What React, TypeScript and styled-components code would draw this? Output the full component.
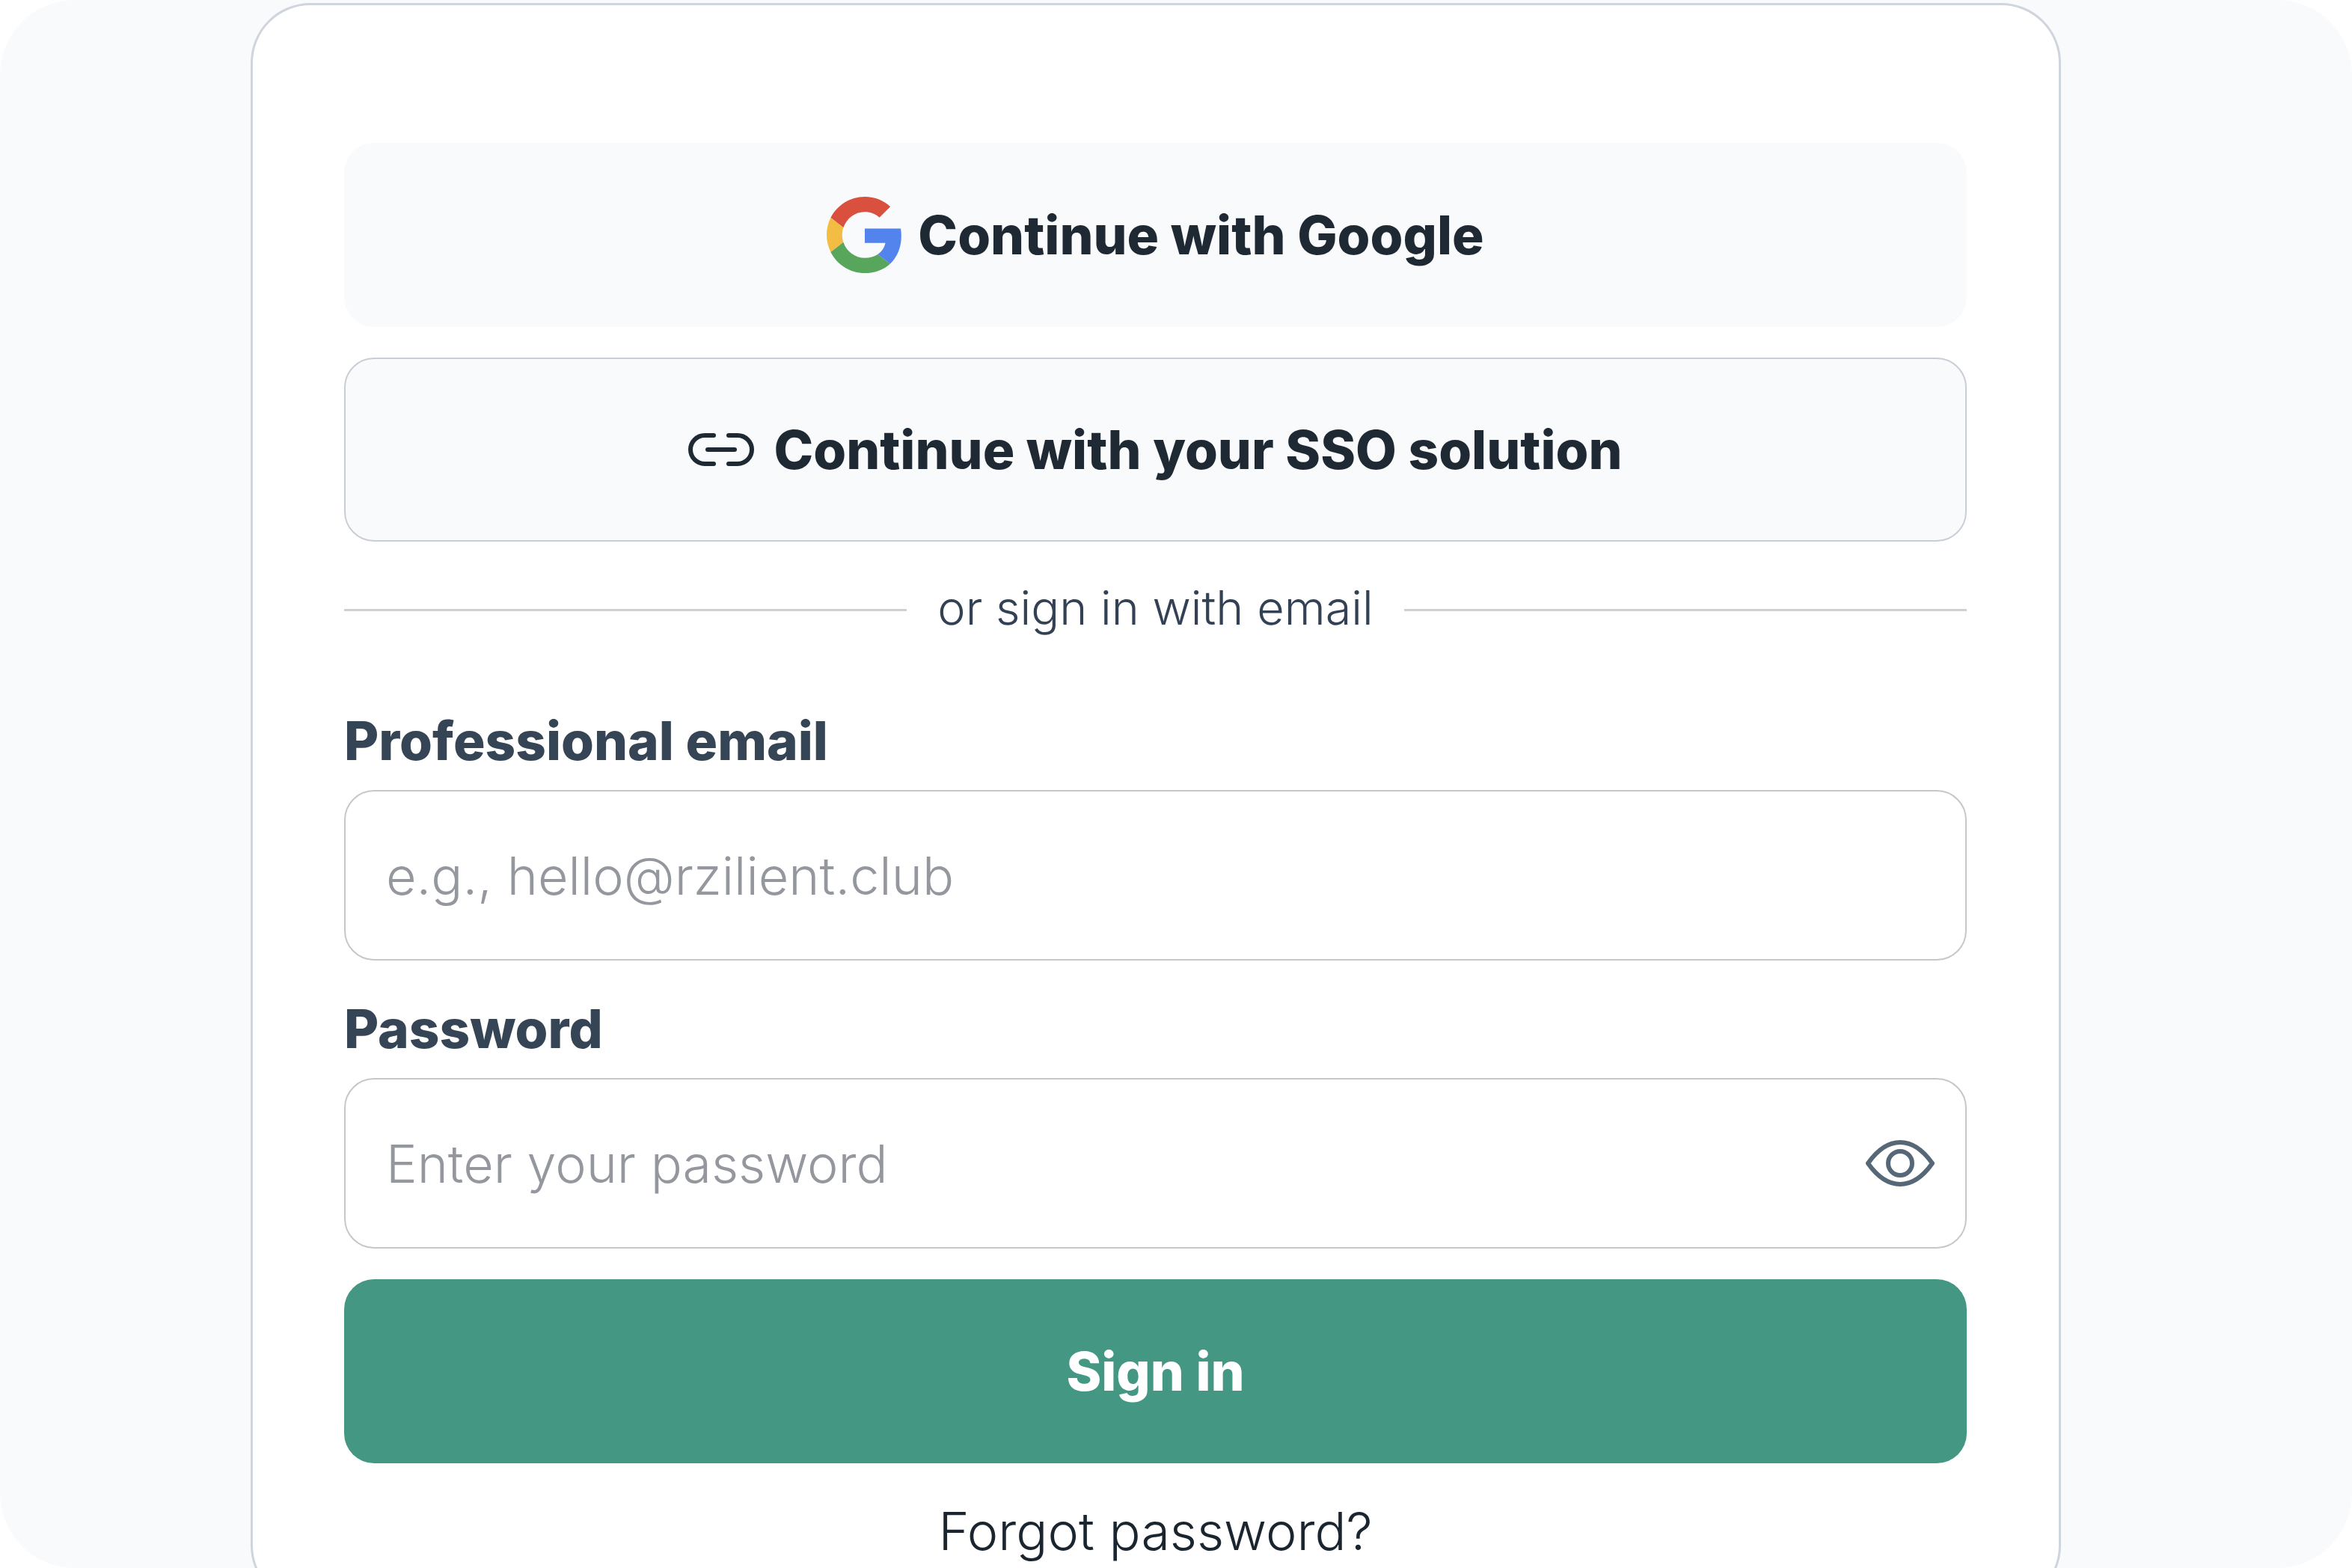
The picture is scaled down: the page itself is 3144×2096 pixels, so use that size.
import React, { useState } from "react";
import styled, { createGlobalStyle } from "styled-components";

const GlobalStyle = createGlobalStyle`
  *, *::before, *::after { box-sizing: border-box; }
  body { margin: 0; background: #ffffff; }
  body, button, input { font-family: Inter, "Open Sans", sans-serif; }
`;

const Page = styled.main`
  height: 100vh;
  overflow: hidden;
  padding: 4px 389px 0 335px;
  border-radius: 100px;
  background: #f9fafc;
`;

const Card = styled.section`
  padding: 184px 123px 46px 122px;
  border: 3px solid #cfd5dd;
  border-radius: 80px;
  background: #ffffff;
`;

const Form = styled.form`
  display: flex;
  flex-direction: column;
  gap: 41px;
`;

const Button = styled.button<{ $variant: "plain" | "outline" | "primary" }>`
  display: flex;
  align-items: center;
  justify-content: center;
  gap: 20px;
  width: 100%;
  height: 246px;
  padding: 0 40px;
  border: ${(p) => (p.$variant === "outline" ? "2px solid #c9ced6" : "none")};
  border-radius: 40px;
  background: ${(p) => (p.$variant === "primary" ? "#449782" : "#f9fafc")};
  color: ${(p) => (p.$variant === "primary" ? "#ffffff" : "#1f2933")};
  font-size: 71px;
  font-weight: 800;
  line-height: 100px;
  cursor: pointer;
`;

const Divider = styled.div`
  display: flex;
  align-items: center;
  gap: 41px;
  margin-bottom: 34px;

  &::before,
  &::after {
    content: "";
    flex: 1;
    height: 3px;
    background: #d0d0d0;
  }
`;

const DividerText = styled.span`
  padding-bottom: 6px;
  color: #334155;
  font-size: 63px;
  font-weight: 300;
  line-height: 94px;
`;

const Field = styled.div`
  display: flex;
  flex-direction: column;
  gap: 16px;
`;

const Label = styled.label`
  color: #364556;
  font-size: 71px;
  font-weight: 800;
  line-height: 100px;
`;

const InputBox = styled.div`
  display: flex;
  align-items: center;
  height: 228px;
  padding: 0 40px 0 54px;
  border: 2px solid #c7c7c7;
  border-radius: 40px;
  background: #ffffff;
`;

const Input = styled.input`
  flex: 1;
  min-width: 0;
  height: 100%;
  padding: 0;
  border: none;
  outline: none;
  background: transparent;
  color: #1f2933;
  font-size: 70px;
  font-weight: 300;

  &::placeholder {
    color: #94989e;
    opacity: 1;
  }
`;

const IconButton = styled.button`
  display: flex;
  padding: 0;
  border: none;
  background: none;
  color: #566777;
  cursor: pointer;
`;

const TextLink = styled.a`
  align-self: center;
  color: #1b2530;
  font-size: 70px;
  font-weight: 300;
  line-height: 100px;
  text-decoration: none;
`;

const GoogleLogo = () => (
  <svg width="102" height="102" viewBox="0 0 48 48" aria-hidden="true">
    <path fill="#d9503f" d="M24 9.5c3.54 0 6.71 1.22 9.21 3.6l6.85-6.85C35.9 2.38 30.47 0 24 0 14.62 0 6.51 5.38 2.56 13.22l7.98 6.19C12.43 13.72 17.74 9.5 24 9.5z" />
    <path fill="#5383ec" d="M46.98 24.55c0-1.57-.15-3.09-.38-4.55H24v9.02h12.94c-.58 2.96-2.26 5.48-4.78 7.18l7.73 6c4.51-4.18 7.09-10.36 7.09-17.65z" />
    <path fill="#f2bd42" d="M10.53 28.59c-.48-1.45-.76-2.99-.76-4.59s.27-3.14.76-4.59l-7.98-6.19C.92 16.46 0 20.12 0 24c0 3.88.92 7.54 2.56 10.78l7.97-6.19z" />
    <path fill="#58a55c" d="M24 48c6.48 0 11.93-2.13 15.89-5.81l-7.73-6c-2.15 1.45-4.92 2.3-8.16 2.3-6.26 0-11.57-4.22-13.47-9.91l-7.98 6.19C6.51 42.62 14.62 48 24 48z" />
  </svg>
);

const LinkIcon = () => (
  <svg width="94" height="48" viewBox="0 0 94 48" fill="none" stroke="currentColor" strokeWidth="6" strokeLinecap="round" strokeLinejoin="round" aria-hidden="true">
    <path d="M34 5H22a19 19 0 0 0 0 38h12" />
    <path d="M54 5h12a19 19 0 0 1 0 38H54" />
    <path d="M26 24h36" />
  </svg>
);

const EyeIcon = () => (
  <svg width="94" height="64" viewBox="0 0 94 64" fill="none" stroke="currentColor" strokeWidth="6" strokeLinejoin="round" aria-hidden="true">
    <path d="M4 32C16 15 30 4 47 4s31 11 43 28C78 49 64 60 47 60S16 49 4 32z" />
    <circle cx="47" cy="32" r="16" />
  </svg>
);

export default function App() {
  const [visible, setVisible] = useState(false);

  return (
    <>
      <GlobalStyle />
      <Page>
        <Card>
          <Form onSubmit={(e) => e.preventDefault()}>
            <Button type="button" $variant="plain">
              <GoogleLogo />
              Continue with Google
            </Button>
            <Button type="button" $variant="outline">
              <LinkIcon />
              Continue with your SSO solution
            </Button>
            <Divider>
              <DividerText>or sign in with email</DividerText>
            </Divider>
            <Field>
              <Label htmlFor="email">Professional email</Label>
              <InputBox>
                <Input id="email" type="email" placeholder="e.g., hello@rzilient.club" />
              </InputBox>
            </Field>
            <Field>
              <Label htmlFor="password">Password</Label>
              <InputBox>
                <Input id="password" type={visible ? "text" : "password"} placeholder="Enter your password" />
                <IconButton type="button" aria-label="Show password" onClick={() => setVisible(!visible)}>
                  <EyeIcon />
                </IconButton>
              </InputBox>
            </Field>
            <Button type="submit" $variant="primary">Sign in</Button>
            <TextLink href="#forgot">Forgot password?</TextLink>
          </Form>
        </Card>
      </Page>
    </>
  );
}
